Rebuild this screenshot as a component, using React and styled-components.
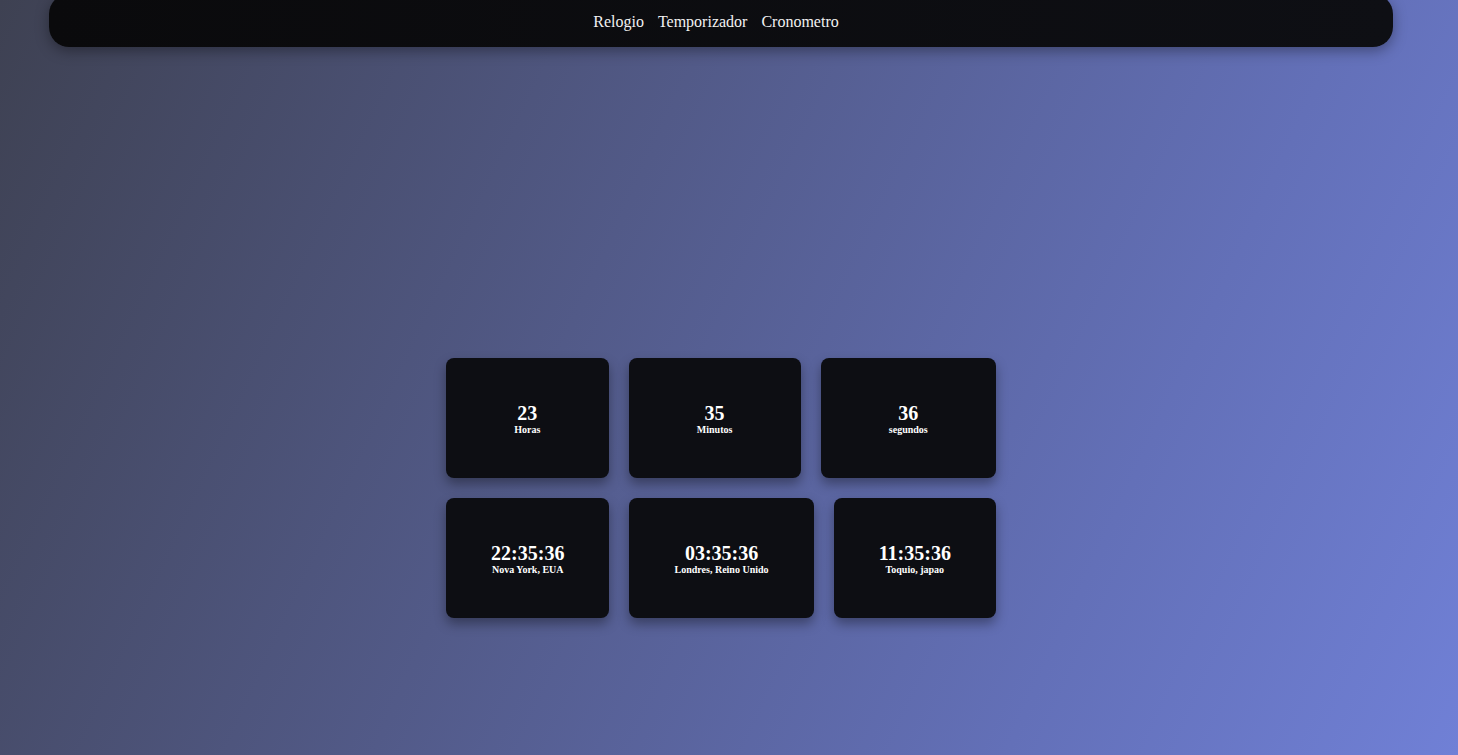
import React from 'react'
import styled, {createGlobalStyle} from 'styled-components'

const GlobalStyle = createGlobalStyle`
  html, body {
    margin: 0;
    padding: 0;
  }
  body {
    min-height: 100vh;
    font-family: "Liberation Serif", "Times New Roman", serif;
    background: linear-gradient(115deg, #3e4152 0%, #525a88 40%, #6370b8 75%, #7080d6 100%);
    background-attachment: fixed;
    color: white;
  }
`

const Page = styled.div`
  width: 1442px;
  min-height: 755px;
  display: flex;
  flex-direction: column;
  align-items: center;
`

const NavBar = styled.nav`
  width: 1344px;
  height: 53px;
  margin-top: -6px;
  padding: 2px 10px 0 0;
  box-sizing: border-box;
  background: linear-gradient(90deg, #0a0a0c, #0e0f14);
  border-radius: 20px;
  box-shadow: 0 4px 14px rgba(0, 0, 0, 0.35);
  display: flex;
  justify-content: center;
  align-items: center;
  gap: 14px;
`

const NavLink = styled.a`
  color: #f2f2f2;
  font-size: 16px;
  text-decoration: none;
  cursor: pointer;
`

const Clocks = styled.section`
  width: 550px;
  margin-top: 311px;
  display: flex;
  flex-direction: column;
  gap: 20px;
`

const Row = styled.div`
  display: flex;
  gap: 20px;
`

const Card = styled.div`
  flex: 1 1 auto;
  height: 120px;
  padding: 3px 20px 0;
  box-sizing: border-box;
  background: #0d0e13;
  border-radius: 8px;
  box-shadow: 0 6px 12px rgba(0, 0, 0, 0.35);
  display: flex;
  flex-direction: column;
  align-items: center;
  justify-content: center;
  font-weight: bold;
`

const Value = styled.span`
  font-size: 20px;
  line-height: 20px;
`

const Label = styled.span`
  font-size: 10px;
  line-height: 14px;
`

const units = [
  {value: '23', label: 'Horas'},
  {value: '35', label: 'Minutos'},
  {value: '36', label: 'segundos'},
]

const cities = [
  {value: '22:35:36', label: 'Nova York, EUA'},
  {value: '03:35:36', label: 'Londres, Reino Unido'},
  {value: '11:35:36', label: 'Toquio, japao'},
]

const ClockCard = ({value, label}) => (
  <Card>
    <Value>{value}</Value>
    <Label>{label}</Label>
  </Card>
)

export default function App() {
  return (
    <>
      <GlobalStyle />
      <Page>
        <NavBar>
          <NavLink>Relogio</NavLink>
          <NavLink>Temporizador</NavLink>
          <NavLink>Cronometro</NavLink>
        </NavBar>
        <Clocks>
          <Row>
            {units.map(u => <ClockCard key={u.label} {...u} />)}
          </Row>
          <Row>
            {cities.map(c => <ClockCard key={c.label} {...c} />)}
          </Row>
        </Clocks>
      </Page>
    </>
  )
}
